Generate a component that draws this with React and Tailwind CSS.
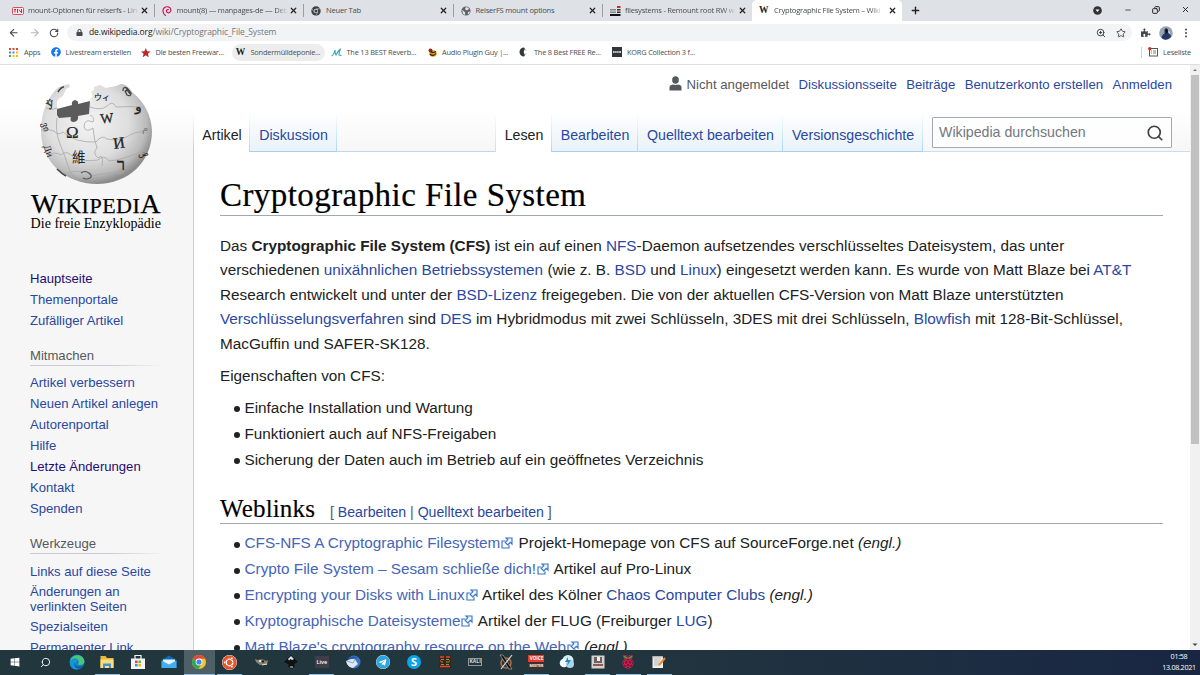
import React from "react";
import { ArrowLeft, ArrowRight, RotateCw, X, Plus, Minus, Star, ZoomIn, Search, Copy } from "lucide-react";
import { FaLock, FaPuzzlePiece, FaFacebook, FaWindows, FaUbuntu, FaRaspberryPi, FaTelegram } from "react-icons/fa";

const GlobeIcon = () => (
  <svg viewBox="0 0 10 10" className="size-2.5">
    <circle cx="5" cy="5" r="4.6" fill="#5f6368" />
    <path d="M1.2 4 3 5.2 4.2 6.5 4 9 2 8Z M5 1 8 2 7 4 5 4.2 4 3Z M7 6 9 5.4 8.4 7.5 6.8 8.4Z" fill="#dee1e6" />
  </svg>
);

const SwirlIcon = () => (
  <svg viewBox="0 0 10 10" className="size-2.5" fill="none" stroke="#d2144f" strokeLinecap="round">
    <path d="M3.500 9.500C.500 7.500.300 3.500 2.300 1.800 4.500 0 8.500.500 8.900 3.800 9 6.300 6.300 7.500 5 6.200 3.900 5 4.600 3.300 6.300 3.500" strokeWidth="1.200" />
  </svg>
);

const ChromeMono = () => (
  <svg viewBox="0 0 10 10" className="size-2.5">
    <circle cx="5" cy="5" r="4.7" fill="#3c4043" />
    <circle cx="5" cy="5" r="2.2" fill="#dee1e6" />
    <circle cx="5" cy="5" r="1.5" fill="#3c4043" />
    <path d="M5 2.8H9.2M3.1 6.1 1 2.6M6.9 6.1 4.8 9.6" stroke="#dee1e6" strokeWidth=".5" />
  </svg>
);

const WIcon = () => <span className="w-2.5 text-center font-['Liberation_Serif',serif] text-[9.500px] leading-none font-bold tracking-normal text-[#222]">W</span>;

const tabs = [
  { w: "w-[143.5px]", t: "mount-Optionen für reiserfs - Lin", icon: (
    <svg viewBox="0 0 12 8" className="h-2 w-3"><rect x=".5" y=".5" width="11" height="7" rx="1" fill="#fbe9ec" stroke="#d05066" /><path d="M2 2.5h2M3 2.5v3M5.5 2v4M7 2.5l2 3M9.5 2v4" stroke="#c62845" strokeWidth="1" /></svg>) },
  { w: "w-[149.5px]", t: "mount(8) — manpages-de — Deb", icon: <SwirlIcon /> },
  { w: "w-[149.5px]", t: "Neuer Tab", icon: <ChromeMono /> },
  { w: "w-[149.5px]", t: "ReiserFS mount options", icon: <GlobeIcon /> },
  { w: "w-[149px]", t: "filesystems - Remount root RW w", icon: (
    <svg viewBox="0 0 11 10" className="h-2.5 w-[11px]"><path d="M0 3h6v1.5H0zM0 5.5h6V7H0z" fill="#888" /><path d="M0 8h10.500v2H0z" fill="#111" /><path d="M7 3h3.500v1.500H7zM7 5.500h3.500V7H7z" fill="#333" /><path d="M7 0h3.500v2H7z" fill="#e02020" /></svg>) },
];

function BrowserTop() {
  return (
    <div className="h-[65px] border-b border-[#dddfe2] bg-white font-['Open_Sans','Noto_Sans',sans-serif] text-[7.600px] tracking-[-0.240px]">
      <div className="flex h-[21px] bg-[#dee1e6] text-[#4a4d51]">
        <div className="w-[11px]" />
        {tabs.map((tab, i) => (
          <div key={i} className={`flex ${tab.w} shrink-0 items-center ${i < 4 ? "border-r border-[#9a9ea3]" : ""} h-[13px] self-center pl-[7px] pr-[5px]`}>
            <div className={`flex shrink-0 items-center ${i === 0 ? "-ml-[6px] w-[16px]" : "w-[15px]"}`}>{tab.icon}</div>
            <div className={`w-[112px] whitespace-nowrap ${i === 2 || i === 3 ? "" : "[mask-image:linear-gradient(to_right,#000_88%,transparent_99%)]"}`}>{tab.t}</div>
            <X className="ml-auto size-[9px] shrink-0 text-[#222]" strokeWidth={3.2} />
          </div>
        ))}
        <div className="flex w-[150px] items-center rounded-t-[5px] bg-white pr-[5px] pl-[7px] text-[#45484b]">
          <div className="w-[15px]"><WIcon /></div>
          <div className="w-[110px] whitespace-nowrap [mask-image:linear-gradient(to_right,#000_88%,transparent_99%)]">Cryptographic File System – Wiki</div>
          <X className="ml-auto size-[9px] shrink-0 text-[#222]" strokeWidth={3.2} />
        </div>
        <Plus className="ml-[8px] size-[11px] self-center text-[#222]" strokeWidth={3} />
        <div className="ml-auto flex items-center pr-[10px] pb-[2px] text-[#222]">
          <svg viewBox="0 0 10 10" className="mt-[2px] mr-[22px] size-[9px]"><circle cx="5" cy="5" r="4.800" fill="#303236" /><path d="M2.800 4h4.400L5 6.600Z" fill="#fff" /></svg>
          <Minus className="mr-[20px] size-[8px]" strokeWidth={2.2} />
          <Copy className="mr-[21px] size-[8px] -scale-x-100" strokeWidth={3} />
          <X className="size-[9px]" strokeWidth={2.4} />
        </div>
      </div>
      <div className="flex h-[23px] items-center text-[#46494d]">
        <ArrowLeft className="ml-[8px] size-[11.500px]" strokeWidth={2.3} />
        <ArrowRight className="ml-[9px] size-[11.500px] text-[#b5b8bb]" strokeWidth={2.3} />
        <RotateCw className="ml-[9px] size-[10px]" strokeWidth={2.6} />
        <div className="ml-[8px] flex h-[17px] w-[1065px] items-center rounded-full bg-[#f1f3f4] pr-[6px] pl-[9px]">
          <FaLock className="size-[7px]" />
          <span className="ml-[6px] text-[8.500px] tracking-[-0.100px] text-[#75787b]"><span className="text-[#202124]">de.wikipedia.org</span>/wiki/Cryptographic_File_System</span>
          <ZoomIn className="ml-auto size-[10px]" strokeWidth={2.4} />
          <Star className="ml-[10px] size-[10px]" strokeWidth={2.2} />
        </div>
        <FaPuzzlePiece className="ml-[9px] size-[9.500px]" />
        <svg viewBox="0 0 14 14" className="ml-[8px] size-[14px]"><circle cx="7" cy="7" r="6.800" fill="#9aa3b2" /><path d="M2.500 12C3 9 4.500 8 5.500 7.500V3.500Q7 1 9 3.500V7q3 1 3 4Q7 16 2.500 12" fill="#223867" /><path d="M6 4l2-1 1 3-2 2Z" fill="#111" /><path d="M9 5l2 1v2Z" fill="#e9e9ee" /></svg>
        <svg viewBox="0 0 4 12" className="ml-[11px] h-[12px] w-[4px]" fill="#46494d"><circle cx="2" cy="2.500" r="1" /><circle cx="2" cy="6" r="1" /><circle cx="2" cy="9.500" r="1" /></svg>
      </div>
      <div className="flex h-[17px] items-center text-[7.400px] tracking-[-0.200px] whitespace-nowrap text-[#4a4d51]">
        <div className="ml-[9px] flex w-[42px] items-center">
          <svg viewBox="0 0 9 9" className="mr-[6px] size-[9px]"><path d="M0 0h2v2H0z" fill="#ea4335" /><path d="M3.500 0h2v2h-2zM7 0h2v2H7z" fill="#ea4335" /><path d="M0 3.500h2v2H0z" fill="#34a853" /><path d="M3.500 3.500h2v2h-2z" fill="#4285f4" /><path d="M7 3.500h2v2H7z" fill="#fbbc05" /><path d="M0 7h2v2H0z" fill="#34a853" /><path d="M3.500 7h2v2h-2zM7 7h2v2H7z" fill="#fbbc05" /></svg>
          <span>Apps</span>
        </div>
        <div className="flex w-[90px] items-center"><FaFacebook className="mr-[4.500px] size-[10px] text-[#1877f2]" /><span>Livestream erstellen</span></div>
        <div className="flex w-[91px] items-center">
          <svg viewBox="0 0 10 10" className="mr-[5px] size-[9.500px]"><path d="M5 0 6.400 3.400 10 3.600 7.300 6 8.200 9.800 5 7.700 1.800 9.800 2.700 6 0 3.600 3.600 3.400Z" fill="#b8292b" /></svg>
          <span>Die besten Freewar...</span>
        </div>
        <div className="flex h-[17px] w-[93px] items-center rounded-full bg-[#ededee] pl-[3.500px]"><WIcon /><span className="ml-[5px]">Sondermülldeponie...</span></div>
        <div className="ml-[6px] flex w-[97px] items-center">
          <svg viewBox="0 0 11 9" className="mr-[4.500px] h-[9px] w-[11px]"><path d="M.500 8 Q3 7 4 2 Q4 6 5 7 Q7 3 9.500.800 Q7.500 5 8 7 L10.500 7.500" fill="none" stroke="#3aa9b0" strokeWidth="1.200" /></svg>
          <span>The 13 BEST Reverb...</span>
        </div>
        <div className="flex w-[91px] items-center">
          <svg viewBox="0 0 9 9" className="mr-[5px] size-[9px]"><ellipse cx="5" cy="5.500" rx="3.600" ry="3.200" fill="#dc9a16" /><circle cx="2.500" cy="2.500" r="2" fill="#8c2d18" /><path d="M2 6q3 3 6-.500M3 3.500q2 2 5 0" stroke="#332313" fill="none" strokeWidth="1.100" /></svg>
          <span>Audio Plugin Guy |...</span>
        </div>
        <div className="flex w-[93px] items-center">
          <svg viewBox="0 0 9 10" className="mr-[6px] h-[10px] w-[9px]"><path d="M5 .500A4.500 4.500 0 0 0 5 9.500L6 8Q3.500 5 6 2Z" fill="#33373b" /><path d="M5.500 3h2M5.500 7h2" stroke="#9bb" /></svg>
          <span>The 8 Best FREE Re...</span>
        </div>
        <div className="flex w-[100px] items-center">
          <svg viewBox="0 0 10 10" className="mr-[5px] size-[10px]"><rect width="10" height="10" fill="#30363a" /><path d="M1 5h8" stroke="#d8d8d8" strokeWidth="1.800" /><path d="M2.800 4v2M4.800 4v2M6.800 4v2" stroke="#30363a" strokeWidth=".500" /></svg>
          <span>KORG Collection 3 f...</span>
        </div>
        <div className="ml-auto flex items-center border-l border-[#cfd1d4] pr-[9px] pl-[6px]">
          <svg viewBox="0 0 10 10" className="mr-[5px] size-[10px]"><rect x="1.500" y="1.500" width="8" height="7.500" fill="none" stroke="#555" /><path d="M3 4h1M5 4h3M3 6h1M5 6h3" stroke="#555" strokeWidth=".800" /><circle cx="1.800" cy="1.800" r="1.700" fill="#c5341f" /></svg>
          <span>Leseliste</span>
        </div>
      </div>
    </div>
  );
}

function Logo() {
  return (
    <div className="flex flex-col items-center font-['Liberation_Serif',serif] text-black">
      <svg viewBox="0 0 112 104" className="h-[104px] w-[112px]">
        <defs>
          <radialGradient id="gl" cx=".42" cy=".38" r=".62">
            <stop offset="0" stopColor="#f4f4f4" /><stop offset=".6" stopColor="#dedede" /><stop offset=".86" stopColor="#bababa" /><stop offset="1" stopColor="#8c8c8c" />
          </radialGradient>
        </defs>
        <path d="M29 2 30 5 26 7 23 14 20 16 17 19 17 24 18 28 51 20 50 16 53 15 51 10 54 8 54 5 60 3 66 6 76 4 81 2Q87 2 92 10A56 54 0 0 1 112 49C112 80 88 102 57 102S1 80 1 49C1 28 9 13 19 5Z" fill="url(#gl)" />
        <path d="M17 27 32 23Q31 19 35 18 39 19 38 22L50 19 49 32 38 34Q39 39 34 40 29 40 31 35L19 36 17 33Z" fill="#5b5b5b" />
        <g fill="none" stroke="#a8a8a8" strokeWidth=".8">
          <path d="M17 36Q15 50 20 62T28 84 38 98M50 33Q55 35 53 40 44 36 44 45 46 51 53 46 54 58 57 66 52 71 58 76 64 70 62 84 66 100M82 16Q84 26 86 32 80 38 88 41 94 36 90 55T94 73" />
          <path d="M1 48Q8 46 14 49 18 54 23 50 35 61 56 60 62 52 67 57 80 60 90 53 98 48 111 51M9 73Q14 69 21 73 27 67 34 76 44 80 58 78 64 72 69 79 82 78 103 69M6 26Q12 29 17 26M50 25Q61 29 67 24 73 18 76 25 90 24 104 25M28 91Q43 86 52 94 66 90 84 91" />
        </g>
        <g fill="#252525" fontFamily="Liberation Serif">
          <text x="26" y="56" fontSize="17" stroke="#252525" strokeWidth=".2">Ω</text>
          <text x="60" y="41" fontSize="14" stroke="#252525" strokeWidth=".3" transform="rotate(-6 65 35)">W</text>
          <text x="73" y="66" fontSize="16" stroke="#252525" strokeWidth=".3" transform="rotate(-8 80 60)">И</text>
          <text x="32" y="80" fontSize="13.500" fontFamily="Noto Sans CJK TC">維</text>
          <text x="77" y="88" fontSize="16" stroke="#252525" strokeWidth=".5">ר</text>
          <text x="54" y="18" fontSize="8" stroke="#252525" strokeWidth=".2" fontFamily="Noto Sans CJK JP">ウィ</text>
          <text x="95" y="29" fontSize="14" stroke="#252525" strokeWidth=".3" fontFamily="DejaVu Sans">و</text>
          <text x="7" y="27" fontSize="11" stroke="#252525" strokeWidth=".3" transform="rotate(-25 10 24)">Ў</text>
          <text x="1" y="50" fontSize="9" fontFamily="DejaVu Sans" transform="rotate(75 7 46)">ვი</text>
          <text x="3" y="71" fontSize="10" transform="rotate(70 8 68)">Ди</text>
          <text x="102" y="50" fontSize="10" fontFamily="DejaVu Sans" fill="#777">م</text>
          <text x="98" y="74" fontSize="9" fontFamily="DejaVu Sans">ض</text>
        </g>
        <path d="M83 9q0-5 4-3l4 5q0 4-4 2l-2-4M86 6l4 6M85 9l4-1" stroke="#444" fill="none" strokeWidth="1.300" />
        <path d="M41 91q4-3 8 0t1 5q-4 2-7 0" stroke="#555" fill="none" strokeWidth="1.200" />
        <path d="M17 87q5 5 9 7M18 10q3-5 6-5" stroke="#444" fill="none" strokeWidth="1.600" />
      </svg>
      <div className="mt-[4px] flex h-[28px] items-baseline leading-[28px] [-webkit-text-stroke:0.250px_#000]">
        <span className="text-[28px]">W</span><span className="text-[22px] tracking-[0.500px]">IKIPEDI</span><span className="text-[28px]">A</span>
      </div>
      <div className="-mt-[2px] text-[14.050px] leading-[15px] whitespace-nowrap">Die freie Enzyklopädie</div>
    </div>
  );
}

function NavGroup({ title, items, className }) {
  return (
    <div className={className}>
      {title && <div className="mb-[6.400px] h-[21px] border-b border-[#d5d8db] text-[13.100px] leading-[21px] text-[#54595d] [border-image:linear-gradient(to_right,#c8ccd1_60%,transparent)_1]">{title}</div>}
      <ul className="text-[13.100px] leading-[21px] whitespace-nowrap text-[#2a47a0]">
        {items.map((t) => (
          <li key={t} className={t === "Hauptseite" || t === "Letzte Änderungen" ? "text-[#220e72]" : ""}>{t}</li>
        ))}
      </ul>
    </div>
  );
}

function Tab({ children, w, active }) {
  return (
    <div className={`flex ${w} shrink-0 ${active ? "bg-white" : "bg-linear-to-b from-white to-[#e8f2f8]"}`}>
      <div className={`flex flex-1 justify-center pt-[14px] pl-px text-[14.200px] leading-[18px] whitespace-nowrap ${active ? "text-[#202122]" : "border-b border-[#a7d0ee] text-[#2a47a0]"}`}>{children}</div>
      {!active && <div className="w-px bg-linear-to-b from-white to-[#a7d7f9]" />}
    </div>
  );
}

const A = ({ children }) => <span className="text-[#2a47a0]">{children}</span>;

function Ext({ children }) {
  return (
    <span className="text-[#4565b8]">{children}
      <svg viewBox="0 0 12 12" className="mr-px ml-px inline-block size-[12px] align-[-1px]" fill="none" stroke="#3b75c5" strokeWidth="1.150">
        <path d="M4.500 4H1v7h7V8.200" /><path d="M5 1h6v6L9.300 5.300 6.800 8 4.200 5.400 6.800 2.800Z" fill="#eef6ff" />
      </svg>
    </span>
  );
}

function Item({ children }) {
  return (
    <li className="flex h-[25.900px] items-center whitespace-nowrap">
      <span className="mt-[3px] mr-[4.500px] ml-[14px] size-[6px] shrink-0 rounded-full bg-[#202122]" />
      <span>{children}</span>
    </li>
  );
}

function Article() {
  return (
    <main className="flex-1 overflow-hidden border-l border-[#b4d8f0] bg-white pl-[26px] pr-[27px] text-[15.310px] leading-[24.400px] text-[#202122]">
      <h1 className="mt-[22px] h-[42px] border-b border-[#a2a9b1] font-['Liberation_Serif',serif] text-[33px] leading-[42px] tracking-[0.430px] whitespace-nowrap text-black [-webkit-text-stroke:0.200px_#000]">Cryptographic File System</h1>
      <p className="mt-[18px] whitespace-nowrap">
        Das <b>Cryptographic File System (CFS)</b> ist ein auf einen <A>NFS</A>-Daemon aufsetzendes verschlüsseltes Dateisystem, das unter<br />
        verschiedenen <A>unixähnlichen Betriebssystemen</A> (wie z. B. <A>BSD</A> und <A>Linux</A>) eingesetzt werden kann. Es wurde von Matt Blaze bei <A>AT&amp;T</A><br />
        Research entwickelt und unter der <A>BSD-Lizenz</A> freigegeben. Die von der aktuellen CFS-Version von Matt Blaze unterstützten<br />
        <A>Verschlüsselungsverfahren</A> sind <A>DES</A> im Hybridmodus mit zwei Schlüsseln, 3DES mit drei Schlüsseln, <A>Blowfish</A> mit 128-Bit-Schlüssel,<br />
        MacGuffin und SAFER-SK128.
      </p>
      <p className="mt-[7.600px]">Eigenschaften von CFS:</p>
      <ul className="mt-[7px]">
        <Item>Einfache Installation und Wartung</Item>
        <Item>Funktioniert auch auf NFS-Freigaben</Item>
        <Item>Sicherung der Daten auch im Betrieb auf ein geöffnetes Verzeichnis</Item>
      </ul>
      <div className="mt-[21.500px] flex h-[30px] items-baseline border-b border-[#a2a9b1] leading-[30px] whitespace-nowrap">
        <h2 className="font-['Liberation_Serif',serif] text-[25px] tracking-[0.150px] text-black [-webkit-text-stroke:0.150px_#000]">Weblinks</h2>
        <span className="ml-[15px] text-[14.120px] text-[#54595d]">[ <A>Bearbeiten</A> | <A>Quelltext bearbeiten</A> ]</span>
      </div>
      <ul className="mt-[6px]">
        <Item><Ext>CFS-NFS A Cryptographic Filesystem</Ext> Projekt-Homepage von CFS auf SourceForge.net <i>(engl.)</i></Item>
        <Item><Ext>Crypto File System – Sesam schließe dich!</Ext> Artikel auf Pro-Linux</Item>
        <Item><Ext>Encrypting your Disks with Linux</Ext> Artikel des Kölner <A>Chaos Computer Clubs</A> <i>(engl.)</i></Item>
        <Item><Ext>Kryptographische Dateisysteme</Ext> Artikel der FLUG (Freiburger <A>LUG</A>)</Item>
        <Item><Ext>Matt Blaze's cryptography resource on the Web</Ext> <i>(engl.)</i></Item>
      </ul>
    </main>
  );
}

function Page() {
  return (
    <div className="flex h-[585px] overflow-hidden bg-[#f6f6f6] font-['Liberation_Sans',Arial,sans-serif]">
      <aside className="w-[193px] shrink-0 bg-[linear-gradient(to_bottom,#fff_50%,#f6f6f6_100%)] bg-[length:100%_86px] bg-no-repeat">
        <div className="flex justify-center pt-[17px] pr-[1.500px]"><Logo /></div>
        <div className="mr-[29px] ml-[30px]">
          <NavGroup className="mt-[36.500px]" items={["Hauptseite", "Themenportale", "Zufälliger Artikel"]} />
          <NavGroup className="mt-[14.500px]" title="Mitmachen" items={["Artikel verbessern", "Neuen Artikel anlegen", "Autorenportal", "Hilfe", "Letzte Änderungen", "Kontakt", "Spenden"]} />
          <NavGroup className="mt-[14px]" title="Werkzeuge" items={["Links auf diese Seite"]} />
          <div className="mt-[3.500px] text-[13.100px] leading-[14.500px] whitespace-nowrap text-[#2a47a0]">Änderungen an<br />verlinkten Seiten</div>
          <div className="mt-[3px] text-[13.100px] leading-[20.900px] whitespace-nowrap text-[#2a47a0]">Spezialseiten<br />Permanenter Link</div>
        </div>
      </aside>
      <div className="flex min-w-0 flex-1 flex-col">
        <div className="flex h-[87px] flex-col bg-[linear-gradient(to_bottom,#fff_50%,#f6f6f6_100%)]">
          <div className="flex h-[47px] items-start justify-end pt-[11px] pr-[18px] text-[13.200px] leading-[18px] whitespace-nowrap text-[#2a47a0]">
            <svg viewBox="0 0 14 16" preserveAspectRatio="none" className="mr-[5px] h-[15px] w-[13px]" fill="#54595d"><ellipse cx="7" cy="4.200" rx="3.600" ry="4" /><path d="M.500 15.500v-3q0-3 3.500-3.500 3 1 6 0 3.500.500 3.500 3.500v3Z" /></svg>
            <span className="text-[#54595d]">Nicht angemeldet</span>
            <span className="ml-[9.400px]">Diskussionsseite</span>
            <span className="ml-[9.400px]">Beiträge</span>
            <span className="ml-[9.400px]">Benutzerkonto erstellen</span>
            <span className="ml-[9.400px]">Anmelden</span>
          </div>
          <div className="flex h-[40px]">
            <div className="w-px bg-linear-to-b from-white to-[#a7d7f9]" />
            <Tab w="w-[55px]" active>Artikel</Tab>
            <div className="w-px bg-linear-to-b from-white to-[#a7d7f9]" />
            <Tab w="w-[87px]">Diskussion</Tab>
            <div className="w-[158px] border-b border-[#bcdaee]" />
            <div className="w-px bg-linear-to-b from-white to-[#c9dfee]" />
            <Tab w="w-[55px]" active>Lesen</Tab>
            <div className="w-px bg-linear-to-b from-white to-[#a7d7f9]" />
            <Tab w="w-[86px]">Bearbeiten</Tab>
            <Tab w="w-[145px]">Quelltext bearbeiten</Tab>
            <Tab w="w-[140px]">Versionsgeschichte</Tab>
            <div className="flex-1 border-b border-[#c9dfee] pt-[5px] pl-[9px]">
              <div className="flex h-[31px] w-[240px] items-center justify-between rounded-[1px] border border-[#a2a9b1] bg-white/80 pr-[7px] pl-[6px] text-[14.200px] text-[#72777d]">
                <span>Wikipedia durchsuchen</span>
                <Search className="size-[18px] text-[#404244]" strokeWidth={2.3} />
              </div>
            </div>
          </div>
        </div>
        <Article />
      </div>
      <div className="flex w-[10px] shrink-0 flex-col items-center bg-[#f1f1f1]">
        <svg viewBox="0 0 10 10" className="size-[10px]"><path d="M3 6h4L5 4Z" fill="#777" /></svg>
        <div className="h-[369px] w-[8px] bg-[#c1c1c1]" />
        <svg viewBox="0 0 10 10" className="mt-auto size-[10px]"><path d="M2.500 3.500h5L5 6Z" fill="#444" /></svg>
      </div>
    </div>
  );
}

const Pic = ({ children }) => <svg viewBox="0 0 16 16" className="size-[16px]">{children}</svg>;

const apps = [
  [<FaWindows className="size-[10px] text-white" />, 0],
  [<Search className="size-[11px] -scale-x-100 text-white" strokeWidth={2} />, 0],
  [<Pic><circle cx="8" cy="8" r="7.500" fill="#1478c8" /><path d="M1 7C2 1 13-2 15.500 7q0 4-5 4-3 0-1-2 1-4-3-4-4 0-5.500 2" fill="#49c67b" /><path d="M1 7c3-4 8-3 8 0-3 0-3 7 4 6Q5 19 1 11Z" fill="#1596d8" /><path d="M6 8c-1 4 4 6 8 4-3 5-11 2-8-4" fill="#0d5aa5" /></Pic>, 0],
  [<Pic><path d="M1.500 2h5l1.500 2h6.500v10h-13Z" fill="#eeb73c" /><path d="M1.500 5.500h13V14h-13Z" fill="#ffdc7c" /><path d="M4 9.500h8V14h-2v-2H6v2H4Z" fill="#4291d0" /></Pic>, 1],
  [<Pic><path d="M5 5V1.500h6V5" stroke="#f5f5f5" fill="none" strokeWidth="1.200" /><path d="M1 4.500h14V15H1Z" fill="#f5f5f5" /><path d="M5 6.500h2.600v2.600H5Z" fill="#e5472e" /><path d="M8.400 6.500H11v2.600H8.400Z" fill="#72b43a" /><path d="M5 9.900h2.600v2.600H5Z" fill="#2c9be0" /><path d="M8.400 9.900H11v2.600H8.400Z" fill="#f2b522" /></Pic>, 0],
  [<Pic><path d="M.500 6 8 1.500 15.500 6v8H.500Z" fill="#1269b5" /><path d="M2 5.500h12v6H2Z" fill="#e8f3fa" /><path d="M.500 6.500 8 10.500l7.500-4V14H.500Z" fill="#42b0ed" /></Pic>, 0],
  [<Pic><circle cx="8" cy="8" r="7" fill="#f4c62b" /><path d="M8 8 1.800 4.800A7 7 0 0 1 14.200 4.800H8Z" fill="#df4a3c" /><path d="M8 8 1.800 4.800A7 7 0 0 0 7.500 15L10.500 10Z" fill="#32a654" /><circle cx="8" cy="8" r="3.400" fill="#fff" /><circle cx="8" cy="8" r="2.600" fill="#4285f4" /></Pic>, 2],
  [<FaUbuntu className="size-[15px] rounded-full bg-white text-[#e4572e]" />, 1],
  [<Pic><path d="M2 5 5 6Q10 4 13 7L15 6 14 11H7L3 8Z" fill="#8a8474" /><circle cx="7" cy="7" r="1" fill="#fff" /><circle cx="10" cy="7.500" r="1.200" fill="#222" /><path d="M9 11l5-1" stroke="#ddd" /></Pic>, 0],
  [<Pic><path d="M8 1 15 8 11 10 12 12 8 15 5 12 6 10.500 1 8Z" fill="#111" /><path d="M8 2 11 5 9 6 7.500 5 6 6.500 5 5Z" fill="#dae2e6" /><path d="M7 13h3" stroke="#ddd" /></Pic>, 0],
  [<div className="flex h-[12px] w-[14px] items-center justify-center bg-[#403d48] text-[5.500px] font-semibold text-white">Live</div>, 1],
  [<Pic><circle cx="9" cy="8" r="6.500" fill="#3976c9" /><path d="M1 7 9 4l4 6-5 4Q2 13 1 7" fill="#dfe9f4" /><path d="M2 7 8 9l2-4" stroke="#91a7c5" fill="none" /><path d="M3 5Q7 0 13 4L8 5Z" fill="#275cac" /></Pic>, 0],
  [<FaTelegram className="size-[14px] rounded-full bg-white text-[#2ca5e0]" />, 0],
  [<Pic><circle cx="8" cy="8" r="7" fill="#0aa5e8" /><text x="8" y="12" textAnchor="middle" fontSize="11" fontWeight="bold" fill="#fff">S</text></Pic>, 0],
  [<Pic><rect x="2" y="1.500" width="12" height="13" fill="#48201b" /><path d="M3 3h4M9 3h4M3 7h1M12 7h1M3 12.500h10" stroke="#d94b2a" strokeWidth="1.500" /><path d="M4 5.500h3M9 5.500h3M4 8h2M9 8h3M4 10.500h3M9 10.500h3" stroke="#55b451" strokeWidth="1.100" /></Pic>, 0],
  [<div className="flex h-[8px] w-[14px] items-center justify-center border border-[#8f999d] text-[5px] font-bold text-[#ddd]">KALI</div>, 0],
  [<Pic><circle cx="8" cy="9" r="5" fill="none" stroke="#bd6536" strokeWidth="1.600" /><path d="M2 1h3l9 14h-3Z" fill="#101010" stroke="#aaa" strokeWidth=".700" /><path d="M14 1 3 15" stroke="#d8d8d8" strokeWidth="1.200" /></Pic>, 0],
  [<div className="flex h-[15px] w-[16px] flex-col items-center justify-center text-[4.500px] leading-[7.500px] font-bold text-white"><span className="w-full bg-[#e83b2c] text-center">VOICE</span><span className="w-full bg-[#343236] text-center text-[3.600px]">MEETER</span></div>, 1],
  [<Pic><circle cx="9" cy="6.500" r="5.500" fill="#d4edf7" /><circle cx="5" cy="9" r="4.300" fill="#eff8fc" /><circle cx="11" cy="10" r="4" fill="#a8d6e9" /><path d="M9 3 6 8h3l-1 4 4-6H9Z" fill="#258bb6" /></Pic>, 0],
  [<Pic><rect x="1.500" y="1.500" width="13" height="13" fill="#d4d0cd" /><rect x="4" y="3" width="8" height="6" fill="#6c6060" /><path d="M7 3h3v4H7Z" fill="#eee" /><path d="M3 11h10" stroke="#7b302d" strokeWidth="1.500" /></Pic>, 1],
  [<div className="relative flex"><svg viewBox="0 0 14 14" className="absolute inset-0 size-[14px]"><circle cx="7" cy="8.500" r="4.300" fill="#8d1036" /><path d="M2.500.500Q6 1 7 3.500 8 1 11.500.500 11 4 7 4 3 4 2.500.500" fill="#4f9f3c" /></svg><FaRaspberryPi className="relative size-[14px] text-[#e2235a]" /></div>, 1],
  [<Pic><path d="M1.500 2h10.500v12H1.500Z" fill="#f2f0e8" /><path d="M3 5h7M3 7h6M3 9h5M3 11h6" stroke="#9ba0a4" strokeWidth=".700" /><path d="M2 2h10v1.500H2Z" fill="#b5b5b5" /><path d="M14 4 8 11" stroke="#e48b37" strokeWidth="2" /></Pic>, 1],
];

function Taskbar() {
  return (
    <div className="flex h-[25px] bg-linear-to-r from-[#22363e] from-50% to-[#192643] font-['Open_Sans',sans-serif]">
      {apps.map(([icon, state], i) => (
        <div key={i} className={`flex w-[30.660px] shrink-0 flex-col items-center ${state === 2 ? "bg-[#4f5f66]" : ""}`}>
          <div className="flex h-[24px] items-center">{icon}</div>
          <div className={`h-px ${state === 2 ? "w-full bg-[#8fc3e8]" : state === 1 ? "w-[25px] bg-[#8fc3e8]" : ""}`} />
        </div>
      ))}
      <div className="mr-[4px] ml-auto flex w-[34px] flex-col items-center pt-[1px] text-[7.200px] leading-[11px] tracking-[-0.300px] whitespace-nowrap text-white">
        <span>01:58</span>
        <span>13.08.2021</span>
      </div>
    </div>
  );
}

export default function App() {
  return (
    <div className="h-[675px] w-[1200px] overflow-hidden">
      <BrowserTop />
      <Page />
      <Taskbar />
    </div>
  );
}
